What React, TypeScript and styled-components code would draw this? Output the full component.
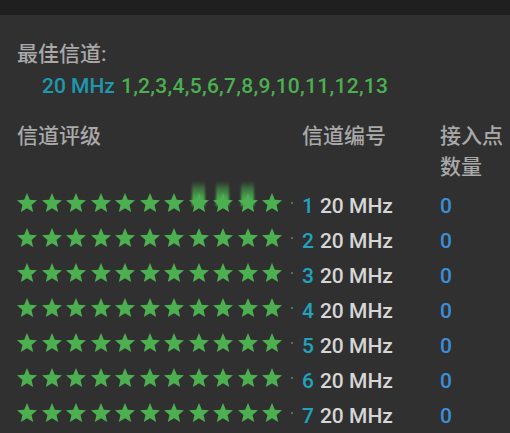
import React from "react";
import styled, { createGlobalStyle } from "styled-components";

const Global = createGlobalStyle`
  html, body { margin: 0; padding: 0; background: #303030; }
  body { font-family: Roboto, "Noto Sans CJK SC", sans-serif; }
`;

const Page = styled.div`
  width: 510px;
  height: 433px;
  overflow: hidden;
  background: #303030;
`;

const TopBar = styled.div`
  height: 15px;
  background: #1f1f1f;
`;

const Content = styled.div`
  padding: 24px 0 0 17px;
`;

const Label = styled.div`
  font-size: 21px;
  line-height: 30px;
  color: #a9a9a9;
  font-weight: 500;
`;

const BestLine = styled.div`
  padding-left: 25px;
  margin-top: 2px;
  font-size: 21px;
  line-height: 30px;
  font-weight: 500;
  display: flex;
  gap: 6px;
`;

const Teal = styled.span`
  color: #1e98ae;
`;

const Green = styled.span`
  color: #4caf50;
  letter-spacing: 0.28px;
`;

const Table = styled.div`
  margin-top: 20px;
  display: grid;
  grid-template-columns: 285px 138px 1fr;
`;

const HeadRow = styled.div`
  display: contents;
`;

const Head = styled.div`
  font-size: 21px;
  line-height: 31px;
  color: #a9a9a9;
  font-weight: 500;
  padding-bottom: 5px;
`;

const Cell = styled.div`
  height: 35px;
  display: flex;
  align-items: center;
  font-size: 21px;
  font-weight: 500;
`;

const Stars = styled.div`
  position: relative;
  display: flex;
  align-items: center;
  gap: 4.5px;
  margin-top: -6px;
`;

const StarBox = styled.span`
  position: relative;
  display: flex;
  width: 20px;
  height: 19px;
`;

const Smear = styled.span`
  position: absolute;
  left: 3px;
  top: -12px;
  width: 13px;
  height: 25px;
  background: linear-gradient(
    to bottom,
    rgba(76, 176, 80, 0) 0%,
    rgba(76, 176, 80, 0.55) 35%,
    rgba(76, 176, 80, 0.95) 70%,
    #4cb050 100%
  );
  filter: blur(1.2px);
`;

const Dot = styled.span`
  width: 2px;
  height: 2px;
  border-radius: 1px;
  background: #5d8a5e;
  margin-left: 4px;
`;

const Num = styled.span`
  color: #1fa3bf;
  margin-right: 6px;
`;

const Mhz = styled.span`
  color: #d6d6d6;
`;

const Zero = styled.span`
  color: #3a8fd8;
`;

const StarSvg = styled.svg`
  position: relative;
`;

const Star = ({ smear }: { smear?: boolean }) => (
  <StarBox>
    <StarSvg width="20" height="19" viewBox="2 2 20 19">
      <path
        d="M12 17.27L18.18 21l-1.64-7.03L22 9.24l-7.19-.61L12 2 9.19 8.63 2 9.24l5.46 4.73L5.82 21z"
        fill="#4cb050"
      />
    </StarSvg>
    {smear && <Smear />}
  </StarBox>
);

const channels = [1, 2, 3, 4, 5, 6, 7];

export default function App() {
  return (
    <Page>
      <Global />
      <TopBar />
      <Content>
        <Label>最佳信道:</Label>
        <BestLine>
          <Teal>20 MHz</Teal>
          <Green>1,2,3,4,5,6,7,8,9,10,11,12,13</Green>
        </BestLine>
        <Table>
          <HeadRow>
            <Head>信道评级</Head>
            <Head>信道编号</Head>
            <Head>
              接入点
              <br />
              数量
            </Head>
          </HeadRow>
          {channels.map((c) => (
            <React.Fragment key={c}>
              <Cell>
                <Stars>
                  {Array.from({ length: 11 }).map((_, i) => (
                    <Star key={i} smear={c === 1 && i >= 7 && i <= 9} />
                  ))}
                  <Dot />
                </Stars>
              </Cell>
              <Cell>
                <Num>{c}</Num>
                <Mhz>20 MHz</Mhz>
              </Cell>
              <Cell>
                <Zero>0</Zero>
              </Cell>
            </React.Fragment>
          ))}
        </Table>
      </Content>
    </Page>
  );
}
